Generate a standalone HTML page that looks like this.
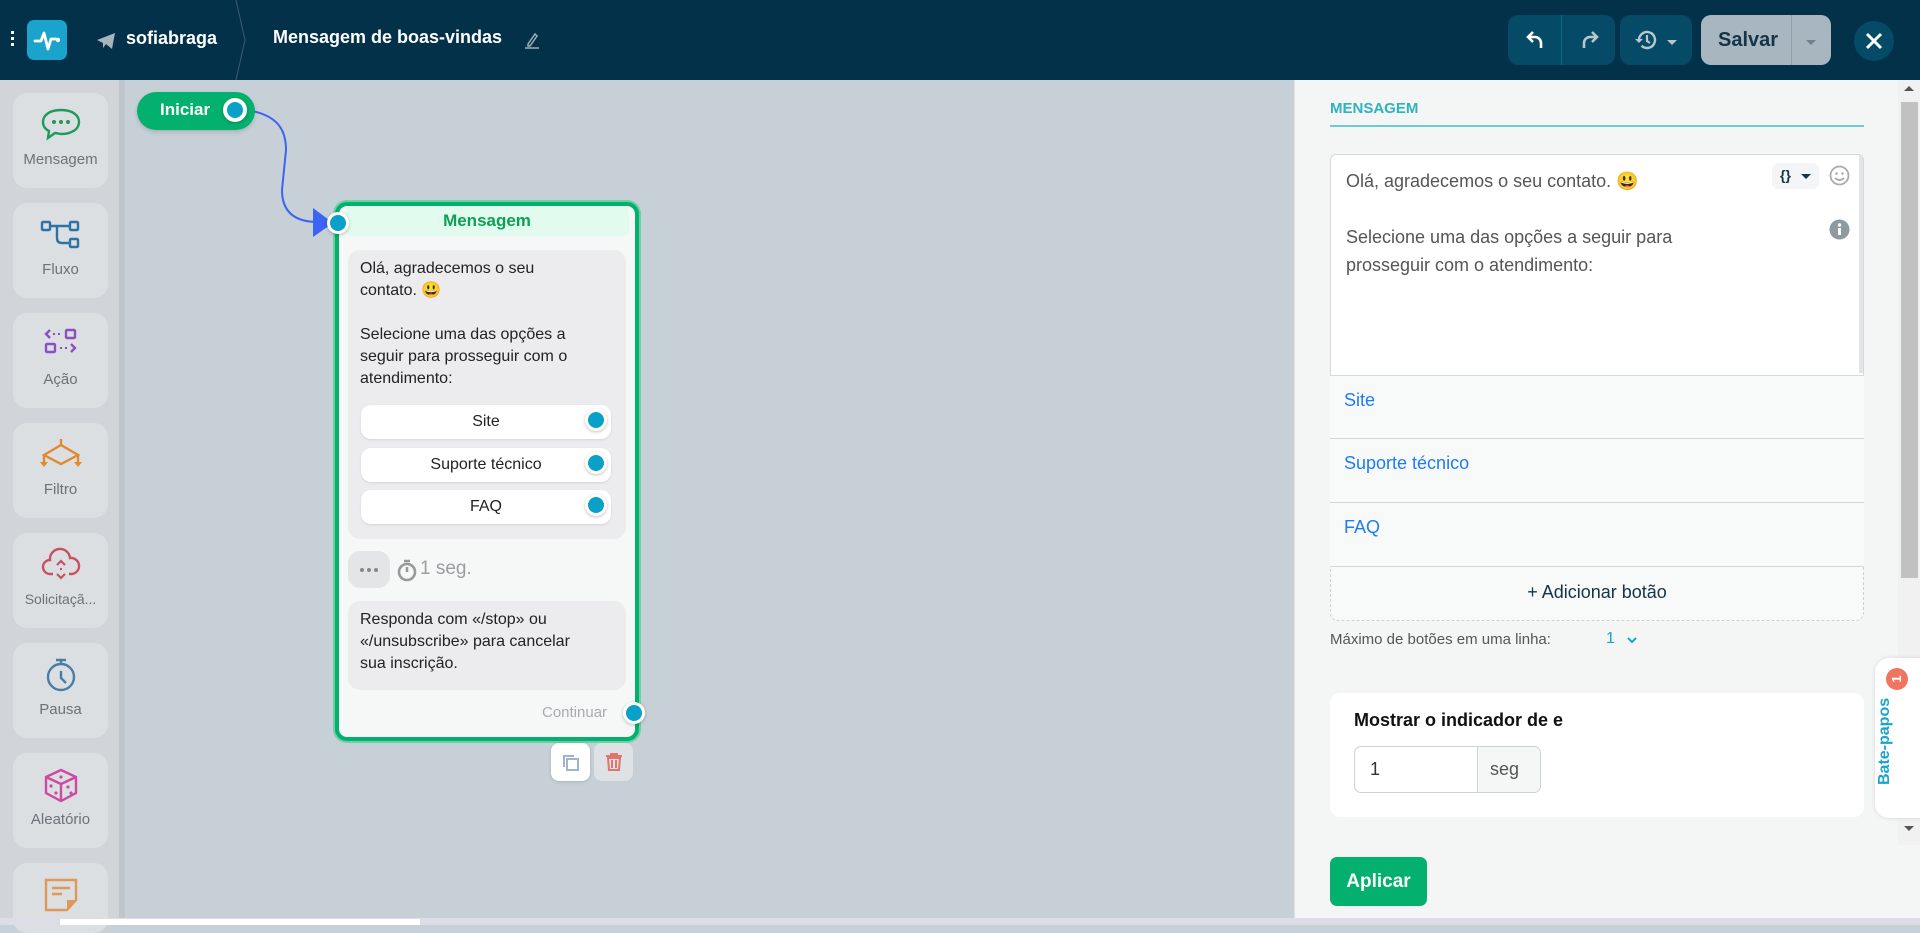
<!DOCTYPE html>
<html><head><meta charset="utf-8">
<style>
*{box-sizing:border-box;margin:0;padding:0}
body{width:1920px;height:925px;overflow:hidden;font-family:"Liberation Sans",sans-serif;background:#c6d0d6;position:relative}
.abs{position:absolute}
#hdr{left:0;top:0;width:1920px;height:80px;background:#03314a}
.tile{position:absolute;left:13px;width:95px;height:95px;background:#dcdfe2;border-radius:14px;text-align:center;font-size:15px;color:#6b7278}
.tile svg{position:absolute;left:27px;top:14px}
.tile span{position:absolute;left:0;right:0;top:58px;white-space:nowrap}
.dot{position:absolute;width:20px;height:20px;border-radius:50%;background:#0ba0c8;border:3px solid #fff;box-shadow:0 1px 3px rgba(0,0,0,.25)}
.btn{position:absolute;left:361px;width:250px;height:34px;background:#fff;border-radius:10px;text-align:center;line-height:34px;font-size:16px;color:#222;box-shadow:0 1px 2px rgba(0,0,0,.1)}
.row{position:absolute;left:1330px;width:534px;height:64px;border-top:1px solid #d5d9dc;background:#f8f9f9;color:#1e7bf5;font-size:18px;padding:14px 0 0 14px}
</style></head><body>
<div id="hdr" class="abs">
  <div class="abs" style="left:11px;top:31px;width:3px;height:3px;background:#fff;box-shadow:0 6px 0 #fff,0 12px 0 #fff"></div>
  <div class="abs" style="left:27px;top:20px;width:40px;height:40px;background:#1aa4cc;border-radius:7px;"></div>
  <svg class="abs" style="left:27px;top:20px" width="40" height="40" viewBox="0 0 40 40"><path d="M8 21h6l3-8 4 16 3-10h5" fill="none" stroke="#fff" stroke-width="2.8" stroke-linejoin="round" stroke-linecap="round"/><circle cx="31" cy="20" r="2.2" fill="#fff"/></svg>
  <svg class="abs" style="left:96px;top:32px" width="20" height="18" viewBox="0 0 20 18"><path d="M1 8 19 1 16 17 10 12 7 16 7 11Z" fill="#a8b4bc"/></svg>
  <div class="abs" style="left:126px;top:28px;color:#fff;font-size:18px;font-weight:bold">sofiabraga</div>
  <svg class="abs" style="left:235px;top:0" width="12" height="80"><path d="M1 0 10 40 1 80" fill="none" stroke="#3b5a6d" stroke-width="1"/></svg>
  <div class="abs" style="left:273px;top:27px;color:#fff;font-size:18px;font-weight:bold">Mensagem de boas-vindas</div>
  <svg class="abs" style="left:524px;top:30px" width="16" height="20" viewBox="0 0 16 20"><path d="M4 14 11 4l2 2-7 10H4Z" fill="none" stroke="#9fb0ba" stroke-width="1.5"/><path d="M1 18h14" stroke="#9fb0ba" stroke-width="1.5"/></svg>
  <div class="abs" style="left:1508px;top:15px;width:107px;height:50px;background:#054a66;border-radius:10px"></div>
  <div class="abs" style="left:1561px;top:15px;width:1px;height:50px;background:#0b6a8a"></div>
  <svg class="abs" style="left:1525px;top:28px" width="22" height="24" viewBox="0 0 22 24"><path d="M8 4 3 9l5 5" fill="none" stroke="#fff" stroke-width="2.6"/><path d="M3 9h7a6 6 0 0 1 6 6v5" fill="none" stroke="#fff" stroke-width="2.6"/></svg>
  <svg class="abs" style="left:1578px;top:28px" width="22" height="24" viewBox="0 0 22 24"><path d="M14 4l5 5-5 5" fill="none" stroke="#b8c6ce" stroke-width="2.6"/><path d="M19 9h-7a6 6 0 0 0-6 6v5" fill="none" stroke="#b8c6ce" stroke-width="2.6"/></svg>
  <div class="abs" style="left:1620px;top:15px;width:72px;height:50px;background:#054a66;border-radius:10px"></div>
  <svg class="abs" style="left:1634px;top:29px" width="24" height="22" viewBox="0 0 24 22"><path d="M5 11a8 8 0 1 1 2.5 5.8" fill="none" stroke="#b8c6ce" stroke-width="2.4"/><path d="M1 10l4 4 4-4" fill="#b8c6ce"/><path d="M13 6v6l3 2" fill="none" stroke="#b8c6ce" stroke-width="2.2"/></svg>
  <div class="abs" style="left:1667px;top:40px;border:5px solid transparent;border-top-color:#b8c6ce"></div>
  <div class="abs" style="left:1701px;top:15px;width:130px;height:50px;background:#a8b7bf;border-radius:10px"></div>
  <div class="abs" style="left:1791px;top:15px;width:1px;height:50px;background:#8fa0a9"></div>
  <div class="abs" style="left:1718px;top:29px;font-size:20px;color:#143447;font-weight:bold">Salvar</div>
  <div class="abs" style="left:1806px;top:40px;border:5px solid transparent;border-top-color:#6c8190"></div>
  <div class="abs" style="left:1854px;top:21px;width:40px;height:40px;border-radius:50%;background:#054a66"></div>
  <svg class="abs" style="left:1864px;top:31px" width="20" height="20"><path d="M3 3 17 17M17 3 3 17" stroke="#fff" stroke-width="3"/></svg>
</div>

<!-- sidebar -->
<div class="abs" style="left:0;top:80px;width:119px;height:845px;background:#d1d5d9"></div>
<div class="abs" style="left:119px;top:80px;width:6px;height:845px;background:#c0c5c9"></div>
<div class="tile" style="top:93px"><svg width="42" height="36" viewBox="0 0 42 36"><path d="M21 3C10 3 3 8 3 15c0 4 2 7 6 9l-1 7 7-5c2 0 4 1 6 1 11 0 18-5 18-12S32 3 21 3Z" fill="none" stroke="#1d9a5c" stroke-width="2.4"/><circle cx="14" cy="15" r="2" fill="#1d9a5c"/><circle cx="21" cy="15" r="2" fill="#1d9a5c"/><circle cx="28" cy="15" r="2" fill="#1d9a5c"/></svg><span>Mensagem</span></div>
<div class="tile" style="top:203px"><svg width="42" height="36" viewBox="0 0 42 36"><g fill="none" stroke="#2c73a5" stroke-width="2.4"><rect x="2" y="5" width="8" height="8" rx="1"/><rect x="30" y="5" width="8" height="8" rx="1"/><rect x="30" y="22" width="8" height="8" rx="1"/><path d="M10 9h20M17 9v12q0 5 5 5h8"/></g></svg><span>Fluxo</span></div>
<div class="tile" style="top:313px"><svg width="42" height="36" viewBox="0 0 42 36"><g fill="none" stroke="#8b4fc0" stroke-width="2.4"><rect x="26" y="3" width="9" height="8" rx="1"/><rect x="6" y="17" width="9" height="8" rx="1"/><path d="M10 3l-4 4 4 4M31 17l4 4-4 4"/></g><g fill="#8b4fc0"><rect x="13" y="6" width="2" height="2"/><rect x="18" y="6" width="2" height="2"/><rect x="20" y="20" width="2" height="2"/><rect x="25" y="20" width="2" height="2"/></g></svg><span>Ação</span></div>
<div class="tile" style="top:423px"><svg width="42" height="36" viewBox="0 0 42 36"><g fill="none" stroke="#e08a2e" stroke-width="2.4"><path d="M21 2v6M4 18l17-10 17 10-17 9Z M4 18v8M38 18v8"/></g><path d="M0 25h8l-4 5ZM34 25h8l-4 5Z" fill="#e08a2e"/></svg><span>Filtro</span></div>
<div class="tile" style="top:533px"><svg width="42" height="36" viewBox="0 0 42 36"><path d="M13 27H10a7 7 0 0 1 0-14 10 10 0 0 1 20-2 8 8 0 0 1 2 16h-3" fill="none" stroke="#c9505f" stroke-width="2.4"/><path d="M17 18l4-4 4 4M17 27l4 4 4-4" fill="none" stroke="#c9505f" stroke-width="2.2"/><rect x="20" y="21" width="2" height="2" fill="#c9505f"/></svg><span style="font-size:14px">Solicitaçã...</span></div>
<div class="tile" style="top:643px"><svg width="42" height="36" viewBox="0 0 42 36"><circle cx="21" cy="20" r="13" fill="none" stroke="#4a7da5" stroke-width="2.4"/><path d="M16 3h10M21 3v4M21 14v7l5 5" fill="none" stroke="#4a7da5" stroke-width="2.4"/></svg><span>Pausa</span></div>
<div class="tile" style="top:753px"><svg width="42" height="36" viewBox="0 0 42 36"><g fill="none" stroke="#cc4aa2" stroke-width="2.4"><path d="M6 10 21 3l15 7v16l-15 8-15-8Z M6 10l15 7 15-7M21 17v17"/></g><g fill="#cc4aa2"><circle cx="21" cy="10" r="1.6"/><circle cx="11" cy="19" r="1.6"/><circle cx="16" cy="26" r="1.6"/><circle cx="28" cy="20" r="1.6"/><circle cx="31" cy="26" r="1.6"/></g></svg><span>Aleatório</span></div>
<div class="tile" style="top:863px;height:70px"><svg width="42" height="36" viewBox="0 0 42 36"><path d="M6 3h30v20l-9 10H6Z" fill="none" stroke="#e0975a" stroke-width="2.4"/><path d="M12 11h18M12 17h10" stroke="#e0975a" stroke-width="2.4"/><path d="M27 33V23h9Z" fill="#e0975a"/></svg></div>

<!-- connection -->
<svg class="abs" style="left:0;top:0" width="700" height="300"><path d="M247 110C278 115 286 130 286 150L282 190C282 212 295 222 318 222" fill="none" stroke="#3b63f5" stroke-width="2"/><path d="M313 208 333 223 313 237Z" fill="#3b63f5"/></svg>

<div class="abs" style="left:137px;top:92px;width:118px;height:38px;background:#03b06e;border-radius:19px;box-shadow:0 2px 4px rgba(0,0,0,.15)"></div>
<div class="abs" style="left:160px;top:100px;color:#fff;font-weight:bold;font-size:17px">Iniciar</div>
<div class="dot" style="left:223px;top:98px;width:24px;height:24px;border-width:4px"></div>

<!-- node -->
<div class="abs" style="left:335px;top:202px;width:304px;height:539px;background:#f6f7f7;border:4px solid #03b06e;border-radius:12px;box-shadow:0 0 0 2px #6ccfa6"></div>
<div class="abs" style="left:345px;top:206px;width:284px;height:30px;background:#e2fbef;border-radius:6px;text-align:center;color:#0f9f55;font-weight:bold;font-size:17px;line-height:30px">Mensagem</div>
<div class="dot" style="left:327px;top:212px;width:22px;height:22px"></div>
<div class="abs" style="left:348px;top:250px;width:278px;height:289px;background:#ececee;border-radius:12px"></div>
<div class="abs" style="left:360px;top:258px;font-size:16px;line-height:22px;color:#222;width:260px">Olá, agradecemos o seu<br>contato. 😃<br><br>Selecione uma das opções a<br>seguir para prosseguir com o<br>atendimento:</div>
<div class="btn" style="top:405px">Site</div>
<div class="btn" style="top:448px">Suporte técnico</div>
<div class="btn" style="top:490px">FAQ</div>
<div class="dot" style="left:585px;top:409px;width:22px;height:22px"></div>
<div class="dot" style="left:585px;top:452px;width:22px;height:22px"></div>
<div class="dot" style="left:585px;top:494px;width:22px;height:22px"></div>
<div class="abs" style="left:348px;top:551px;width:42px;height:37px;background:#e4e5e7;border-radius:12px"></div>
<div class="abs" style="left:360px;top:568px;width:4px;height:4px;border-radius:2px;background:#888;box-shadow:7px 0 0 #888,14px 0 0 #888"></div>
<svg class="abs" style="left:396px;top:558px" width="22" height="24" viewBox="0 0 22 24"><circle cx="11" cy="14" r="8" fill="none" stroke="#999" stroke-width="2.6"/><path d="M8 3h6M11 9v5" stroke="#999" stroke-width="2.6"/></svg>
<div class="abs" style="left:420px;top:558px;color:#9b9ea1;font-size:19px">1 seg.</div>
<div class="abs" style="left:348px;top:601px;width:278px;height:89px;background:#ececee;border-radius:12px"></div>
<div class="abs" style="left:360px;top:609px;font-size:16px;line-height:22px;color:#222">Responda com «/stop» ou<br>«/unsubscribe» para cancelar<br>sua inscrição.</div>
<div class="abs" style="left:542px;top:704px;color:#a8acaf;font-size:15px">Continuar</div>
<div class="dot" style="left:623px;top:702px;width:22px;height:22px"></div>
<div class="abs" style="left:551px;top:743px;width:39px;height:38px;background:#fff;border-radius:8px;box-shadow:0 1px 3px rgba(0,0,0,.15)"></div>
<svg class="abs" style="left:561px;top:752px" width="20" height="20"><path d="M2 3h11v2H4v10H2Z" fill="#9fb4c6"/><rect x="6" y="7" width="11" height="11" fill="none" stroke="#9fb4c6" stroke-width="2"/></svg>
<div class="abs" style="left:594px;top:743px;width:39px;height:38px;background:#dfe2e4;border-radius:8px"></div>
<svg class="abs" style="left:604px;top:752px" width="20" height="20"><path d="M2 4h16M7 4V2h6v2M4 6h12l-1 12H5Z" fill="none" stroke="#e2756b" stroke-width="2"/><path d="M8 8v8M12 8v8" stroke="#e2756b" stroke-width="2"/></svg>

<!-- right panel -->
<div class="abs" style="left:1294px;top:80px;width:626px;height:845px;background:#f4f5f5;border-left:1px solid #dde1e3"></div>
<div class="abs" style="left:1330px;top:100px;color:#2fb3bf;font-weight:bold;font-size:15px">MENSAGEM</div>
<div class="abs" style="left:1330px;top:125px;width:534px;height:2px;background:#6dcbd3"></div>
<div class="abs" style="left:1330px;top:154px;width:534px;height:412px;border:1px solid #d5d9dc;border-radius:6px 6px 0 0;background:#fff"></div>
<div class="abs" style="left:1346px;top:167px;font-size:18px;line-height:28px;color:#555">Olá, agradecemos o seu contato. 😃<br><br>Selecione uma das opções a seguir para<br>prosseguir com o atendimento:</div>
<div class="abs" style="left:1772px;top:163px;width:47px;height:26px;background:#f3f5f6;border-radius:6px;font-size:14px;color:#143447;font-weight:bold;padding:4px 0 0 8px">{}</div>
<div class="abs" style="left:1801px;top:174px;border:5px solid transparent;border-top-color:#143447"></div>
<svg class="abs" style="left:1829px;top:165px" width="21" height="21"><circle cx="10.5" cy="10.5" r="9" fill="none" stroke="#a8acaf" stroke-width="1.8"/><circle cx="7.5" cy="8.5" r="1.3" fill="#a8acaf"/><circle cx="13.5" cy="8.5" r="1.3" fill="#a8acaf"/><path d="M6 13q4.5 4 9 0" fill="none" stroke="#a8acaf" stroke-width="1.8"/></svg>
<svg class="abs" style="left:1829px;top:219px" width="21" height="21"><circle cx="10.5" cy="10.5" r="10" fill="#8d9a9f"/><rect x="9" y="9" width="3" height="7" fill="#fff"/><circle cx="10.5" cy="6" r="1.7" fill="#fff"/></svg>
<div class="abs" style="left:1859px;top:155px;width:4px;height:218px;background:#e2e4e5"></div>
<div class="row" style="top:375px">Site</div>
<div class="row" style="top:438px">Suporte técnico</div>
<div class="row" style="top:502px">FAQ</div>
<div class="abs" style="left:1330px;top:566px;width:534px;height:55px;border:1px dashed #ccd1d4;border-top:1px solid #d5d9dc;border-radius:0 0 8px 8px;background:#f8f9f9;text-align:center;font-size:18px;color:#143447;line-height:50px">+ Adicionar botão</div>
<div class="abs" style="left:1330px;top:631px;font-size:15px;color:#555">Máximo de botões em uma linha:</div>
<div class="abs" style="left:1606px;top:630px;font-size:16px;color:#1aa4cc">1</div>
<svg class="abs" style="left:1626px;top:636px" width="12" height="10"><path d="M2 2l4 4 4-4" fill="none" stroke="#1aa4cc" stroke-width="2"/></svg>
<div class="abs" style="left:1330px;top:693px;width:534px;height:124px;background:#fff;border-radius:10px"></div>
<div class="abs" style="left:1354px;top:710px;font-size:18px;font-weight:bold;color:#111">Mostrar o indicador de e</div>
<div class="abs" style="left:1354px;top:746px;width:187px;height:47px;border:1px solid #ccd1d4;border-radius:7px;background:#fff"></div>
<div class="abs" style="left:1477px;top:747px;width:63px;height:45px;border-left:1px solid #ccd1d4;background:#f5f6f6;border-radius:0 7px 7px 0;font-size:18px;color:#555;padding:12px 0 0 12px">seg</div>
<div class="abs" style="left:1370px;top:759px;font-size:18px;color:#333">1</div>
<div class="abs" style="left:1330px;top:857px;width:97px;height:49px;background:#03b06e;border-radius:7px;color:#fff;font-weight:bold;font-size:19px;text-align:center;line-height:49px">Aplicar</div>

<!-- scrollbar -->
<div class="abs" style="left:1898px;top:80px;width:22px;height:765px;background:#f1f1f1"></div>
<div class="abs" style="left:1901px;top:102px;width:17px;height:476px;background:#c1c1c1"></div>
<div class="abs" style="left:1904px;top:86px;border:5px solid transparent;border-bottom-color:#555;border-top:0"></div>
<div class="abs" style="left:1904px;top:826px;border:5px solid transparent;border-top-color:#555;border-bottom:0"></div>
<div class="abs" style="left:1875px;top:658px;width:50px;height:160px;background:#fff;border-radius:14px 0 0 14px;box-shadow:0 0 4px rgba(0,0,0,.12)"></div>
<div class="abs" style="left:1886px;top:668px;width:22px;height:22px;border-radius:50%;background:#ef7561;color:#fff;font-size:13px;font-weight:bold;text-align:center;line-height:22px;transform:rotate(-90deg)">1</div>
<div class="abs" style="left:1851px;top:740px;width:70px;height:20px;transform:rotate(-90deg);color:#1aa4cc;font-weight:bold;font-size:16px;white-space:nowrap;text-align:center">Bate-papos</div>

<div class="abs" style="left:0;top:918px;width:1920px;height:7px;background:#dcdde6"></div>
<div class="abs" style="left:60px;top:919px;width:360px;height:6px;background:#fff"></div>
</body></html>
